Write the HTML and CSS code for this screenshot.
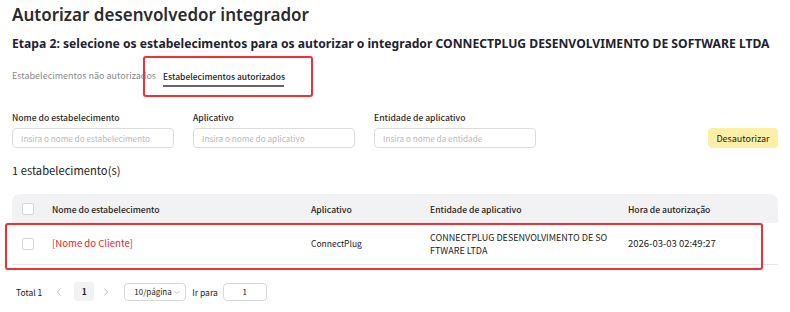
FILE: index.html
```html
<!DOCTYPE html>
<html lang="pt-BR">
<head>
    <meta charset="UTF-8">
    <meta name="viewport" content="width=device-width, initial-scale=1.0">
    <title>Autorizar desenvolvedor integrador</title>
    <link rel="stylesheet" href="styles.css">
</head>
<body>
    <h1 class="page-title">Autorizar desenvolvedor integrador</h1>
    <h2 class="step-title">Etapa 2: selecione os estabelecimentos para os autorizar o integrador CONNECTPLUG DESENVOLVIMENTO DE SOFTWARE LTDA</h2>

    <div class="tabs">
        <div class="tab">Estabelecimentos não autorizados</div>
        <div class="tab active">Estabelecimentos autorizados</div>
        <div class="mark mark-tab"></div>
    </div>

    <div class="filters">
        <div class="field">
            <label>Nome do estabelecimento</label>
            <input type="text" placeholder="Insira o nome do estabelecimento">
        </div>
        <div class="field">
            <label>Aplicativo</label>
            <input type="text" placeholder="Insira o nome do aplicativo">
        </div>
        <div class="field">
            <label>Entidade de aplicativo</label>
            <input type="text" placeholder="Insira o nome da entidade">
        </div>
        <button class="btn-warn">Desautorizar</button>
    </div>

    <div class="count">1 estabelecimento(s)</div>

    <div class="table-wrap">
        <table>
            <thead>
                <tr>
                    <th class="col-check"><span class="checkbox"></span></th>
                    <th class="col-name">Nome do estabelecimento</th>
                    <th class="col-app">Aplicativo</th>
                    <th class="col-entity">Entidade de aplicativo</th>
                    <th>Hora de autorização</th>
                </tr>
            </thead>
            <tbody>
                <tr>
                    <td class="col-check"><span class="checkbox"></span></td>
                    <td class="client">[Nome do Cliente]</td>
                    <td class="app">ConnectPlug</td>
                    <td class="entity">CONNECTPLUG DESENVOLVIMENTO DE SO<br>FTWARE LTDA</td>
                    <td>2026-03-03 02:49:27</td>
                </tr>
            </tbody>
        </table>
        <div class="mark mark-row"></div>
    </div>

    <div class="pager">
        <span class="total">Total 1</span>
        <span class="arrow">
            <svg width="8" height="10" viewBox="0 0 8 10"><path d="M5.5 1.5 L2.5 5 L5.5 8.5" fill="none" stroke="#c4c4c4" stroke-width="1"/></svg>
        </span>
        <span class="page current">1</span>
        <span class="arrow">
            <svg width="8" height="10" viewBox="0 0 8 10"><path d="M2.5 1.5 L5.5 5 L2.5 8.5" fill="none" stroke="#c4c4c4" stroke-width="1"/></svg>
        </span>
        <span class="size-select">10/página
            <svg width="8" height="8" viewBox="0 0 8 8"><path d="M1.5 3 L4 5.5 L6.5 3" fill="none" stroke="#bbb" stroke-width="0.9"/></svg>
        </span>
        <span class="goto">Ir para</span>
        <span class="goto-input">1</span>
    </div>
</body>
</html>
```

FILE: styles.css
```css
body {
    font-family: "Noto Sans CJK SC", "Noto Sans", Arial, sans-serif;
    color: #333;
    margin: 0;
    padding: 0 12px;
    background: #fff;
}
.page-title {
    font-family: "Noto Sans", Arial, sans-serif;
    font-size: 17px;
    font-weight: 600;
    color: #2b2b2b;
    margin: 0;
    padding-top: 3px;
    line-height: 24px;
}
.step-title {
    font-family: "Noto Sans", Arial, sans-serif;
    font-size: 12.15px;
    font-weight: 700;
    color: #1d2330;
    margin: 8px 0 0 0;
    line-height: 18px;
    white-space: nowrap;
}
.tabs {
    position: relative;
    display: flex;
    margin-top: 16px;
    height: 27px;
}
.tab {
    flex: none;
    width: 135px;
    margin-right: 16px;
    font-size: 9px;
    color: #8a8a8a;
    line-height: 14px;
    white-space: nowrap;
}
.tab.active {
    width: 121px;
    font-size: 8.5px;
    color: #222;
    font-weight: 500;
    border-bottom: 2px solid #666;
    height: 14px;
    padding-bottom: 2px;
}
.mark {
    position: absolute;
    border: 2px solid #e8333b;
    border-radius: 3px;
    box-shadow: 0 0 1px rgba(232, 51, 59, 0.4);
}
.mark-tab {
    left: 131px;
    top: -13px;
    width: 166px;
    height: 37px;
}
.filters {
    display: flex;
    align-items: flex-end;
    margin-top: 15px;
}
.field {
    display: flex;
    flex-direction: column;
    width: 162px;
    margin-right: 19px;
}
.field label {
    font-size: 8.6px;
    font-weight: 500;
    color: #2a2a2a;
    line-height: 12px;
    margin-bottom: 5px;
}
.field input {
    height: 20px;
    box-sizing: border-box;
    border: 1px solid #dcdcdc;
    border-radius: 4px;
    padding: 0 8px;
    font-family: inherit;
    font-size: 8.2px;
    outline: none;
}
.field input::placeholder {
    color: #b8b8b8;
}
.btn-warn {
    margin-left: auto;
    height: 20px;
    width: 70px;
    border: none;
    border-radius: 4px;
    background: #fdf0a6;
    color: #222;
    font-family: inherit;
    font-size: 9px;
    padding: 0;
}
.count {
    font-size: 11.2px;
    color: #222;
    margin-top: 14px;
    line-height: 16px;
}
.table-wrap {
    position: relative;
    margin-top: 16px;
}
table {
    width: 100%;
    border-collapse: collapse;
    font-size: 9.5px;
    color: #222;
}
th {
    background: #f2f2f4;
    font-size: 8.6px;
    font-weight: 500;
    text-align: left;
    height: 29px;
    padding: 0;
}
th:first-child {
    border-top-left-radius: 8px;
}
th:last-child {
    border-top-right-radius: 8px;
}
td {
    height: 41px;
    padding: 0;
    border-bottom: 1px solid #e6e6e6;
    line-height: 13px;
}
.col-check {
    width: 30px;
    padding-left: 10px;
}
.col-name {
    width: 259px;
}
.col-app {
    width: 119px;
}
.col-entity {
    width: 198px;
}
.checkbox {
    display: block;
    width: 10px;
    height: 10px;
    border: 1px solid #d6d6d6;
    border-radius: 2px;
    background: #fff;
}
.client {
    color: #e0242c;
    font-size: 9.6px;
}
.app {
    font-size: 8.5px;
}
.entity {
    font-size: 9px;
}
.mark-row {
    left: -7px;
    top: 29px;
    width: 754px;
    height: 43px;
}
.pager {
    display: flex;
    align-items: center;
    margin-top: 17px;
    font-size: 8.5px;
    color: #222;
    height: 19px;
    padding-left: 4px;
}
.total {
    margin-right: 11px;
}
.arrow {
    display: flex;
    width: 12px;
    justify-content: center;
}
.page {
    width: 20px;
    height: 19px;
    line-height: 19px;
    text-align: center;
    margin: 0 6px 0 9px;
    border-radius: 4px;
    font-weight: 600;
}
.page.current {
    background: #f2f2f4;
}
.size-select {
    display: flex;
    align-items: center;
    justify-content: space-between;
    box-sizing: border-box;
    width: 62px;
    height: 18px;
    border: 1px solid #d8d8d8;
    border-radius: 4px;
    padding: 0 4px 0 9px;
    margin-left: 12px;
    font-size: 8px;
}
.goto {
    margin: 0 5px 0 6px;
}
.goto-input {
    box-sizing: border-box;
    width: 44px;
    height: 18px;
    line-height: 16px;
    border: 1px solid #d8d8d8;
    border-radius: 4px;
    text-align: center;
    font-size: 8px;
}
```
